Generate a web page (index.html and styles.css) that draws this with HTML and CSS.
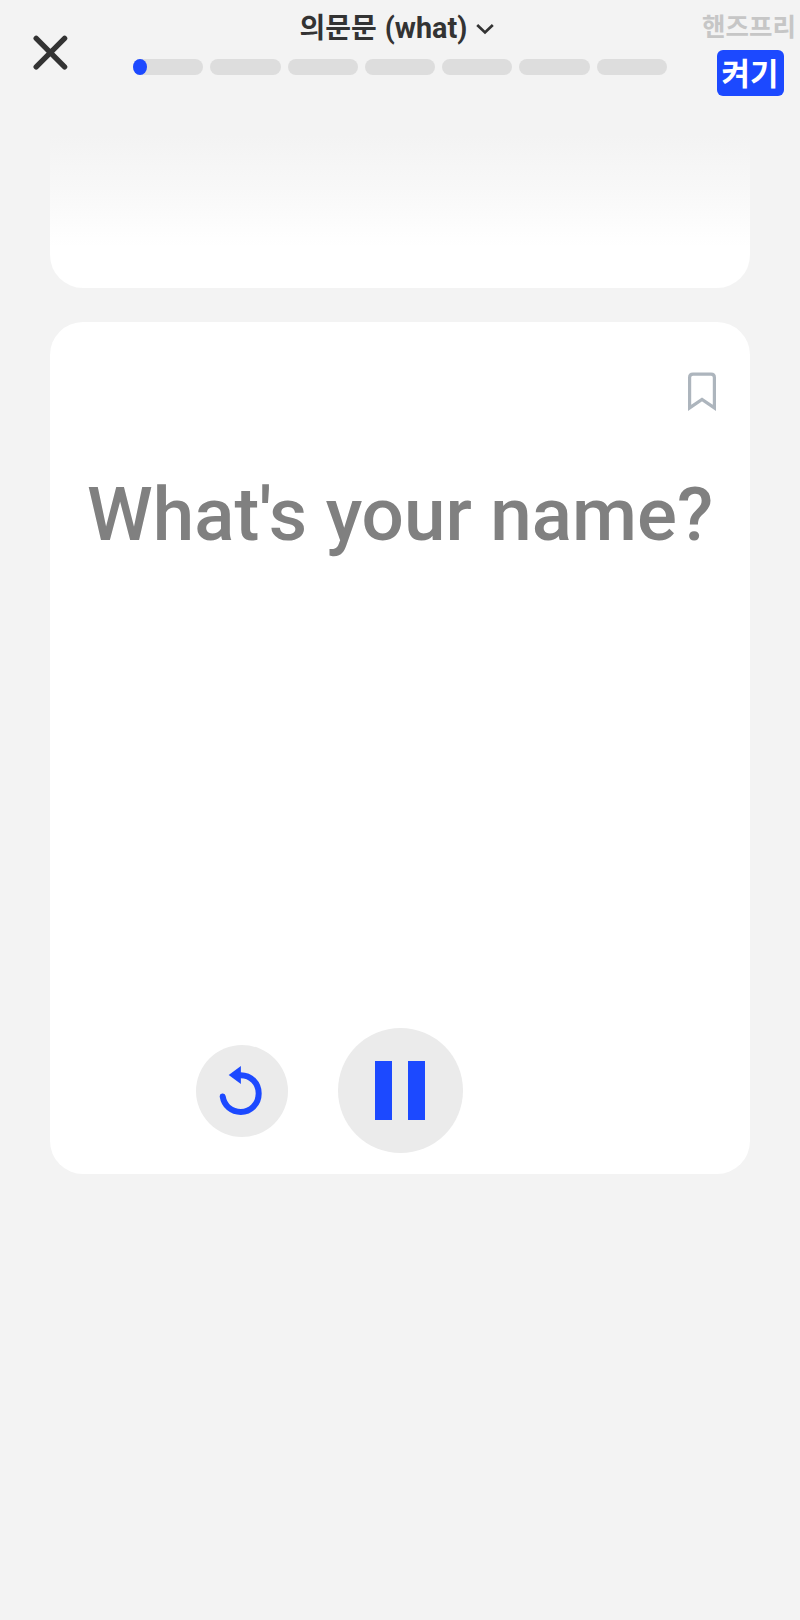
FILE: index.html
```html
<!DOCTYPE html>
<html lang="ko">
<head>
<meta charset="utf-8">
<title>의문문 (what)</title>
<link rel="stylesheet" href="styles.css">
</head>
<body>
<div class="app">
  <header class="header">
    <button class="close" aria-label="닫기">
      <svg width="36" height="36" viewBox="0 0 36 36"><path d="M4.2 4.4 32.6 32.8M32.6 4.4 4.2 32.8"/></svg>
    </button>
    <div class="lesson">
      <div class="lesson-title">
        <span>의문문 <span class="latin">(what)</span></span>
        <svg class="chevron" width="18" height="12" viewBox="0 0 18 12"><path d="M1.2 2 9 9.5 16.8 2"/></svg>
      </div>
      <div class="progress">
        <span class="segment"><i class="fill"></i></span>
        <span class="segment"></span>
        <span class="segment"></span>
        <span class="segment"></span>
        <span class="segment"></span>
        <span class="segment"></span>
        <span class="segment"></span>
      </div>
    </div>
    <div class="handsfree">
      <span class="handsfree-label">핸즈프리</span>
      <button class="toggle">켜기</button>
    </div>
  </header>
  <main class="cards">
    <section class="card card-previous"></section>
    <section class="card card-current">
      <svg class="bookmark" width="28" height="39" viewBox="0 0 28 39"><path d="M1.6 34.9V4.5Q1.6 1.1 5 1.1H23Q26.4 1.1 26.4 4.5V34.9L14 26.5Z"/></svg>
      <h1 class="sentence">What's your name?</h1>
      <div class="controls">
        <button class="control replay" aria-label="다시 듣기">
          <svg width="44" height="50" viewBox="0 0 44 50"><path class="arc" d="M2.7 30.5C4.2 40 11.7 46 20.8 46C30.7 46 38.7 38 38.7 27.5S30.7 9.2 20.8 9.2"/><path class="arrow" d="M20.9 0V18L8.7 9Z"/></svg>
        </button>
        <button class="control pause" aria-label="일시정지">
          <span class="bar"></span><span class="bar"></span>
        </button>
      </div>
    </section>
  </main>
</div>
</body>
</html>
```

FILE: styles.css
```css
* { box-sizing: border-box; }

body {
  margin: 0;
  background: #f3f3f3;
  font-family: Roboto, "Noto Sans CJK KR", sans-serif;
}

button {
  margin: 0;
  padding: 0;
  border: 0;
  background: none;
  font: inherit;
}

svg { display: block; fill: none; overflow: visible; }

.app {
  height: 1620px;
  overflow: hidden;
}

.header {
  display: grid;
  grid-template-columns: 133px 534px 133px;
  height: 135px;
}

.close {
  width: 36px;
  height: 36px;
  margin: 34px 0 0 32px;
}

.close path {
  stroke: #333;
  stroke-width: 5.4;
  stroke-linecap: round;
}

.lesson-title {
  display: flex;
  align-items: center;
  height: 58.5px;
  padding: 0 0 2px 166.5px;
  color: #333;
  font-size: 28px;
  font-weight: 700;
  line-height: 56px;
  white-space: nowrap;
}

.latin {
  margin-left: 1px;
  font-size: 28.8px;
}

.chevron { margin: 2px 0 0 9px; }

.chevron path {
  stroke: #333;
  stroke-width: 2.7;
}

.progress {
  display: grid;
  grid-template-columns: repeat(7, 1fr);
  column-gap: 7px;
}

.segment {
  height: 16px;
  border-radius: 8px;
  background: #ddd;
}

.fill {
  display: block;
  width: 14px;
  height: 16px;
  border-radius: 50%;
  background: #1c49ff;
}

.handsfree {
  display: flex;
  flex-direction: column;
  align-items: center;
  padding: 0 0 0 33px;
  font-family: "Noto Sans CJK KR", sans-serif;
  font-weight: 700;
}

.handsfree-label {
  height: 50px;
  margin-left: -2px;
  color: #c6c6c6;
  font-size: 25.5px;
  line-height: 49px;
  white-space: nowrap;
}

.toggle {
  width: 67px;
  height: 45.5px;
  padding-bottom: 1px;
  border-radius: 6px;
  background: #1c49ff;
  color: #fff;
  font-size: 31px;
  line-height: 42px;
}

.cards {
  display: flex;
  flex-direction: column;
  gap: 33.5px;
  padding: 0 50px 0 50.4px;
}

.card {
  background: #fff;
  border-radius: 33px;
}

.card-previous {
  height: 153px;
  border-radius: 0 0 33px 33px;
  background: linear-gradient(#f3f3f3, #f8f8f8 35%, #fff 73%);
}

.card-current {
  display: flex;
  flex-direction: column;
  height: 852.5px;
}

.bookmark {
  align-self: flex-end;
  margin: 51px 34px 0 0;
}

.bookmark path {
  stroke: #adb5bd;
  stroke-width: 3.2;
}

.sentence {
  margin: 59.5px 0 0;
  color: #808080;
  font-size: 74.6px;
  font-weight: 500;
  line-height: 88px;
  text-align: center;
  white-space: nowrap;
}

.controls {
  display: flex;
  align-items: center;
  gap: 50.2px;
  margin: auto 0 20.8px 145.3px;
}

.control {
  display: flex;
  align-items: center;
  justify-content: center;
  border-radius: 50%;
  background: #ebebeb;
}

.replay {
  width: 92px;
  height: 92px;
}

.arc {
  stroke: #1c49ff;
  stroke-width: 6;
  stroke-linecap: round;
}

.arrow { fill: #1c49ff; }

.pause {
  gap: 16px;
  width: 125px;
  height: 125px;
}

.bar {
  width: 17px;
  height: 58.5px;
  background: #1c49ff;
}
```
